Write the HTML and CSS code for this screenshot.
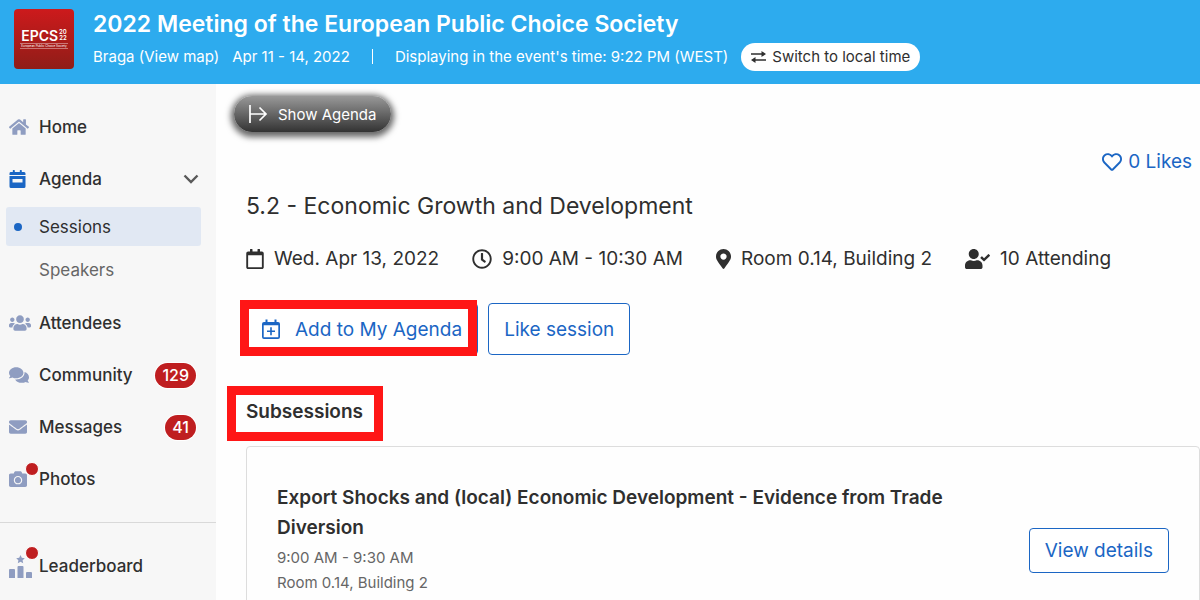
FILE: index.html
```html
<!DOCTYPE html>
<html lang="en">
<head>
    <meta charset="UTF-8">
    <meta name="viewport" content="width=device-width, initial-scale=1.0">
    <title>2022 Meeting of the European Public Choice Society</title>
    <link rel="stylesheet" href="styles.css">
</head>
<body>
    <header class="topbar">
        <div class="logo">
            <div class="logo-name">EPCS<span class="logo-year"><span>20</span><span>22</span></span></div>
            <div class="logo-sub">European Public Choice Society</div>
        </div>
        <div class="event">
            <h1>2022 Meeting of the European Public Choice Society</h1>
            <div class="event-info">
                <a href="#map">Braga (View map)</a>
                <span class="event-dates">Apr 11 - 14, 2022</span>
                <span class="separator"></span>
                <span>Displaying in the event's time: 9:22 PM (WEST)</span>
                <button class="switch-time" type="button">
                    <svg width="15" height="12" viewBox="0 0 15 12"><path d="M0 3h11M4 9h11" stroke="currentColor" stroke-width="1.7"/><path d="M10.5 0L15 3l-4.500 3zM4.500 6L0 9l4.500 3z" fill="currentColor"/></svg>
                    Switch to local time
                </button>
            </div>
        </div>
    </header>

    <div class="layout">
        <nav class="sidebar">
            <ul class="menu">
                <li><a href="#home" class="menu-item">
                    <span class="icon"><svg width="20" height="18" viewBox="0 0 576 512"><path d="M280.37 148.26L96 300.11V464a16 16 0 0 0 16 16l112.06-.29a16 16 0 0 0 15.92-16V368a16 16 0 0 1 16-16h64a16 16 0 0 1 16 16v95.64a16 16 0 0 0 16 16.05L464 480a16 16 0 0 0 16-16V300L295.67 148.26a12.19 12.19 0 0 0-15.3 0zM571.6 251.47L488 182.56V44.05a12 12 0 0 0-12-12h-56a12 12 0 0 0-12 12v72.61L318.47 43a48 48 0 0 0-61 0L4.34 251.47a12 12 0 0 0-1.6 16.9l25.5 31A12 12 0 0 0 45.15 301l235.22-193.74a12.19 12.19 0 0 1 15.3 0L530.9 301a12 12 0 0 0 16.9-1.6l25.5-31a12 12 0 0 0-1.7-16.93z"/></svg></span>
                    Home</a></li>
                <li><a href="#agenda" class="menu-item open">
                    <span class="icon"><svg width="17" height="18" viewBox="0 0 17 18"><path d="M1.500 2H3.800V.6a.6.6 0 0 1 .6-.6h.8a.6.6 0 0 1 .6.6V2h5V.6a.6.6 0 0 1 .6-.6h.8a.6.6 0 0 1 .6.6V2h2.300A1.500 1.500 0 0 1 16.500 3.500V5H.5V3.500A1.500 1.500 0 0 1 1.500 2z"/><path fill-rule="evenodd" d="M.5 6h16v10.500a1.500 1.500 0 0 1-1.500 1.500H2a1.500 1.500 0 0 1-1.500-1.500zM3.500 9v3.500h10V9z"/></svg></span>
                    Agenda
                    <svg class="chevron" width="16" height="10" viewBox="0 0 16 10"><path d="M1.500 1.500L8 8l6.500-6.500" fill="none" stroke="#595959" stroke-width="2.400"/></svg></a>
                    <ul class="submenu">
                        <li><a href="#sessions" class="active">Sessions</a></li>
                        <li><a href="#speakers">Speakers</a></li>
                    </ul>
                </li>
                <li><a href="#attendees" class="menu-item">
                    <span class="icon"><svg width="22" height="18" viewBox="0 0 640 512"><path d="M96 224c35.3 0 64-28.7 64-64s-28.7-64-64-64-64 28.7-64 64 28.700 64 64 64zm448 0c35.3 0 64-28.7 64-64s-28.7-64-64-64-64 28.700-64 64 28.700 64 64 64zm32 32h-64c-17.600 0-33.500 7.100-45.100 18.600 40.300 22.100 68.900 62 75.100 109.400h66c17.700 0 32-14.300 32-32v-32c0-35.300-28.700-64-64-64zm-256 0c61.900 0 112-50.100 112-112S381.900 32 320 32 208 82.100 208 144s50.100 112 112 112zm76.800 32h-8.300c-20.800 10-43.900 16-68.500 16s-47.600-6-68.500-16h-8.300C179.600 288 128 339.600 128 403.200V432c0 26.500 21.500 48 48 48h288c26.500 0 48-21.500 48-48v-28.800c0-63.600-51.600-115.200-115.200-115.200zm-223.700-13.400C161.500 263.100 145.600 256 128 256H64c-35.300 0-64 28.700-64 64v32c0 17.700 14.300 32 32 32h65.900c6.300-47.400 34.900-87.300 75.200-109.400z"/></svg></span>
                    Attendees</a></li>
                <li><a href="#community" class="menu-item">
                    <span class="icon"><svg width="20" height="18" viewBox="0 0 576 512"><path d="M416 192c0-88.400-93.100-160-208-160S0 103.600 0 192c0 34.300 14.100 65.900 38 92-13.400 30.200-35.500 54.200-35.800 54.500-2.200 2.300-2.800 5.700-1.500 8.700S4.800 352 8 352c36.600 0 66.900-12.300 88.700-25 32.200 15.700 70.300 25 111.300 25 114.900 0 208-71.600 208-160zm122 220c23.900-26 38-57.700 38-92 0-66.900-53.500-124.200-129.300-148.100.9 6.600 1.300 13.300 1.300 20.100 0 105.900-107.700 192-240 192-10.800 0-21.300-.8-31.700-1.900C207.800 439.600 281.800 480 368 480c41 0 79.100-9.200 111.300-25 21.800 12.700 52.100 25 88.700 25 3.200 0 6.100-1.900 7.300-4.800 1.300-2.900.7-6.300-1.500-8.700-.3-.3-22.400-24.200-35.800-54.500z"/></svg></span>
                    Community <span class="badge">129</span></a></li>
                <li><a href="#messages" class="menu-item">
                    <span class="icon"><svg width="18" height="18" viewBox="0 0 512 512"><path d="M502.300 190.800c3.900-3.100 9.700-.2 9.700 4.700V400c0 26.500-21.500 48-48 48H48c-26.500 0-48-21.500-48-48V195.600c0-5 5.700-7.800 9.700-4.700 22.400 17.400 52.100 39.500 154.100 113.600 21.100 15.400 56.700 47.800 92.200 47.600 35.700.3 72-32.800 92.300-47.600 102-74.100 131.600-96.300 154-113.700zM256 320c23.200.4 56.600-29.200 73.400-41.400 132.700-96.300 142.800-104.700 173.400-128.700 5.800-4.500 9.200-11.500 9.200-18.900v-19c0-26.500-21.500-48-48-48H48c-26.500 0-48 21.500-48 48v19c0 7.400 3.400 14.300 9.200 18.900 30.600 23.900 40.700 32.400 173.400 128.700 16.800 12.200 50.200 41.800 73.400 41.400z"/></svg></span>
                    Messages <span class="badge">41</span></a></li>
                <li><a href="#photos" class="menu-item">
                    <span class="icon has-dot"><svg width="18" height="18" viewBox="0 0 512 512"><path d="M512 144v288c0 26.500-21.500 48-48 48H48c-26.500 0-48-21.500-48-48V144c0-26.500 21.500-48 48-48h88l12.300-32.900c7-18.700 24.900-31.100 44.900-31.100h125.500c20 0 37.900 12.400 44.900 31.100L376 96h88c26.500 0 48 21.500 48 48zM376 288c0-66.200-53.800-120-120-120s-120 53.800-120 120 53.800 120 120 120 120-53.800 120-120zm-32 0c0 48.500-39.500 88-88 88s-88-39.500-88-88 39.500-88 88-88 88 39.500 88 88z"/></svg></span>
                    Photos</a></li>
            </ul>
            <ul class="menu menu-extra">
                <li><a href="#leaderboard" class="menu-item">
                    <span class="icon has-dot"><svg width="24" height="24" viewBox="0 0 24 24"><path d="M1 15h4a1 1 0 0 1 1 1v8H0v-8a1 1 0 0 1 1-1zM9.500 12h4a1 1 0 0 1 1 1v11h-6V13a1 1 0 0 1 1-1zM18 18h4a1 1 0 0 1 1 1v5h-6v-5a1 1 0 0 1 1-1zM11.500 1l1.300 2.800 3 .4-2.200 2.100.6 3L11.500 7.800 8.800 9.300l.6-3-2.200-2.100 3-.4z"/></svg></span>
                    Leaderboard</a></li>
            </ul>
        </nav>

        <main class="content">
            <button class="show-agenda" type="button">
                <svg width="20" height="20" viewBox="0 0 20 20"><path d="M2 1v18M2 10h16M11.500 3.500L18 10l-6.500 6.500" fill="none" stroke="#fff" stroke-width="1.700"/></svg>
                Show Agenda
            </button>

            <a href="#likes" class="likes">
                <svg width="20" height="20" viewBox="0 0 512 512"><path d="M458.400 64.300C400.600 15.700 311.300 23 256 79.300 200.700 23 111.400 15.600 53.600 64.300-21.600 127.600-10.600 230.800 43 285.500l175.400 178.700c10 10.200 23.400 15.900 37.600 15.900 14.300 0 27.600-5.600 37.600-15.800L469 285.600c53.500-54.700 64.700-157.900-10.600-221.300zm-23.600 187.500L259.400 430.500c-2.400 2.400-4.400 2.400-6.800 0L77.200 251.800c-36.500-37.200-43.900-107.600 7.300-150.700 38.900-32.700 98.900-27.800 136.500 10.500l35 35.700 35-35.700c37.800-38.500 97.800-43.200 136.500-10.600 51.100 43.100 43.500 113.900 7.300 150.800z"/></svg>
                0 Likes
            </a>

            <h2>5.2 - Economic Growth and Development</h2>

            <div class="session-info">
                <span class="info">
                    <svg width="18" height="20" viewBox="0 0 448 512"><path d="M400 64h-48V12c0-6.600-5.400-12-12-12h-40c-6.600 0-12 5.400-12 12v52H160V12c0-6.600-5.400-12-12-12h-40c-6.600 0-12 5.400-12 12v52H48C21.500 64 0 85.500 0 112v352c0 26.500 21.500 48 48 48h352c26.500 0 48-21.500 48-48V112c0-26.500-21.500-48-48-48zm-6 400H54c-3.300 0-6-2.700-6-6V160h352v298c0 3.300-2.700 6-6 6z"/></svg>
                    Wed. Apr 13, 2022
                </span>
                <span class="info">
                    <svg width="20" height="20" viewBox="0 0 512 512"><path d="M256 8C119 8 8 119 8 256s111 248 248 248 248-111 248-248S393 8 256 8zm0 448c-110.500 0-200-89.500-200-200S145.500 56 256 56s200 89.500 200 200-89.500 200-200 200zm61.800-104.400l-84.900-61.700c-3.100-2.300-4.900-5.900-4.900-9.700V116c0-6.600 5.400-12 12-12h32c6.600 0 12 5.400 12 12v141.700l66.800 48.600c5.400 3.900 6.500 11.400 2.600 16.800L334.600 349c-3.900 5.300-11.400 6.500-16.800 2.600z"/></svg>
                    9:00 AM - 10:30 AM
                </span>
                <span class="info">
                    <svg width="15" height="20" viewBox="0 0 384 512"><path d="M172.268 501.670C26.970 291.031 0 269.413 0 192 0 85.961 85.961 0 192 0s192 85.961 192 192c0 77.413-26.970 99.031-172.268 309.670-9.535 13.774-29.930 13.773-39.464 0zM192 272c44.183 0 80-35.817 80-80s-35.817-80-80-80-80 35.817-80 80 35.817 80 80 80z"/></svg>
                    Room 0.14, Building 2
                </span>
                <span class="info">
                    <svg width="25" height="20" viewBox="0 0 640 512"><path d="M224 256c70.700 0 128-57.300 128-128S294.700 0 224 0 96 57.300 96 128s57.300 128 128 128zm89.600 32h-16.700c-22.200 10.200-46.900 16-72.900 16s-50.600-5.800-72.900-16h-16.700C60.200 288 0 348.200 0 422.400V464c0 26.500 21.500 48 48 48h352c26.500 0 48-21.500 48-48v-41.600c0-74.200-60.200-134.400-134.400-134.400zm323-128.400l-27.800-28.100c-4.600-4.700-12.100-4.700-16.800-.1l-104.800 104-45.500-45.800c-4.600-4.700-12.100-4.700-16.800-.1l-28.100 27.900c-4.700 4.600-4.700 12.100-.1 16.800l81.700 82.300c4.600 4.700 12.100 4.700 16.800.1l141.300-140.200c4.600-4.700 4.700-12.200.1-16.800z"/></svg>
                    10 Attending
                </span>
            </div>

            <div class="actions">
                <button class="btn add-agenda" type="button">
                    <svg width="18" height="20" viewBox="0 0 18 20"><path fill-rule="evenodd" d="M3.500 3V.5h2V3h7V.5h2V3H16a2 2 0 0 1 2 2v13a2 2 0 0 1-2 2H2a2 2 0 0 1-2-2V5a2 2 0 0 1 2-2zM1.700 6.200v12.100h14.600V6.200z"/><path d="M8.200 8.200h1.600v3.200H13V13H9.800v3.200H8.200V13H5v-1.600h3.200z"/></svg>
                    Add to My Agenda
                </button>
                <button class="btn" type="button">Like session</button>
            </div>

            <h3><span class="marked">Subsessions</span></h3>

            <section class="card">
                <div class="card-body">
                    <h4>Export Shocks and (local) Economic Development - Evidence from Trade Diversion</h4>
                    <p>9:00 AM - 9:30 AM</p>
                    <p>Room 0.14, Building 2</p>
                </div>
                <button class="btn btn-details" type="button">View details</button>
            </section>
        </main>
    </div>
</body>
</html>
```
FILE: styles.css
```css
* {
    box-sizing: border-box;
}

body {
    margin: 0;
    height: 100vh;
    display: flex;
    flex-direction: column;
    overflow: hidden;
    font-family: Inter, "Liberation Sans", sans-serif;
    font-size: 17px;
    color: #2f2f2f;
    background: #fefefe;
}

h1, h2, h3, h4, p, ul {
    margin: 0;
    padding: 0;
}

ul {
    list-style: none;
}

a {
    color: inherit;
    text-decoration: none;
}

button {
    font-family: inherit;
    cursor: pointer;
}

svg {
    flex-shrink: 0;
    fill: currentColor;
}

/* header */
.topbar {
    display: flex;
    flex-shrink: 0;
    align-items: flex-start;
    gap: 19px;
    height: 84px;
    padding: 9px 14px;
    background: #2dabee;
    color: white;
}

.logo {
    width: 60px;
    height: 60px;
    padding-top: 18px;
    border-radius: 4px;
    background: linear-gradient(#cd1a1c, #8f1d18);
    text-align: center;
}

.logo-name {
    display: flex;
    justify-content: center;
    align-items: center;
    gap: 1px;
    height: 16px;
    font-size: 14px;
    font-weight: 600;
}

.logo-year {
    display: flex;
    flex-direction: column;
    font-size: 6px;
    line-height: 6px;
}

.logo-sub {
    margin: 0 6px;
    border-top: 1px solid rgba(255, 255, 255, 0.4);
    border-bottom: 1px solid rgba(255, 255, 255, 0.4);
    font-size: 3px;
    line-height: 4px;
    white-space: nowrap;
}

.event h1 {
    font-size: 23px;
    font-weight: 600;
    line-height: 30px;
}

.event-info {
    display: flex;
    align-items: center;
    height: 35px;
    font-size: 15px;
    white-space: nowrap;
}

.event-dates {
    margin-left: 13px;
}

.separator {
    width: 1px;
    height: 15px;
    margin: 0 22px;
    background: white;
}

.switch-time {
    display: flex;
    align-items: center;
    gap: 6px;
    height: 28px;
    margin-left: 13px;
    padding: 0 10px;
    border: none;
    border-radius: 14px;
    background: white;
    color: #2f2f2f;
    font-size: 15px;
}

.layout {
    display: flex;
    flex: 1;
    min-height: 0;
}

/* sidebar */
.sidebar {
    flex: 0 0 216px;
    padding-top: 17px;
    background: #f7f7f7;
    overflow: hidden;
}

.menu-item {
    display: flex;
    align-items: center;
    height: 52px;
    padding: 0 20px 0 9px;
    font-size: 17px;
    font-weight: 500;
}

.icon {
    position: relative;
    display: flex;
    flex: 0 0 30px;
    color: #8f9dc1;
}

.open .icon {
    color: #1b66c4;
}

.has-dot::after {
    content: "";
    position: absolute;
    top: -8px;
    left: 16px;
    width: 12px;
    height: 12px;
    border: 1px solid white;
    border-radius: 50%;
    background: #bf1e20;
}

.chevron {
    margin-left: auto;
    margin-right: -3px;
}

.submenu {
    padding: 2px 15px 8px 6px;
}

.submenu a {
    display: flex;
    align-items: center;
    height: 39px;
    padding-left: 33px;
    border-radius: 3px;
    font-size: 17px;
    color: #666;
}

.submenu li + li {
    margin-top: 4px;
}

.submenu .active {
    padding-left: 8px;
    background: #e1e8f3;
    color: #2f2f2f;
}

.submenu .active::before {
    content: "";
    width: 8px;
    height: 8px;
    margin-right: 17px;
    border-radius: 50%;
    background: #1b66c4;
}

.badge {
    margin-left: auto;
    padding: 0 7px;
    border-radius: 13px;
    background: #bf1e20;
    box-shadow: 0 0 0 1px white;
    color: white;
    font-size: 16px;
    line-height: 25px;
}

.menu-extra {
    margin-top: 17px;
    padding-top: 17px;
    border-top: 1px solid #d9d9d9;
}

/* session page */
.content {
    display: flex;
    flex: 1;
    flex-direction: column;
    min-width: 0;
    padding: 12px 0 0 30px;
    overflow: hidden;
}

.show-agenda {
    display: flex;
    flex-shrink: 0;
    align-self: flex-start;
    align-items: center;
    gap: 10px;
    height: 36px;
    margin-left: -12px;
    padding: 0 15px 0 14px;
    border: none;
    border-radius: 18px;
    background: linear-gradient(#999, #333);
    box-shadow: 0 2px 6px 3px rgba(0, 0, 0, 0.6);
    color: white;
    font-size: 15px;
}

.likes {
    display: flex;
    align-self: flex-end;
    align-items: center;
    gap: 6px;
    height: 26px;
    margin: 18px 8px 0 0;
    color: #1b66c4;
    font-size: 19px;
}

h2 {
    margin-top: 17px;
    font-size: 23px;
    font-weight: 400;
    line-height: 32px;
}

.session-info {
    display: flex;
    gap: 33px;
    margin-top: 23px;
    font-size: 19px;
    line-height: 28px;
    white-space: nowrap;
}

.info {
    display: flex;
    align-items: center;
    gap: 10px;
}

.actions {
    display: flex;
    gap: 10px;
    margin-top: 30px;
}

.btn {
    display: flex;
    flex-shrink: 0;
    align-items: center;
    height: 52px;
    padding: 0 15px;
    border: 1px solid #1b66c4;
    border-radius: 4px;
    background: white;
    color: #1b66c4;
    font-size: 19px;
    white-space: nowrap;
}

.add-agenda {
    position: relative;
    gap: 15px;
}

/* red highlight frames */
.add-agenda::after,
.marked::after {
    content: "";
    position: absolute;
    border: 9px solid #ff1616;
}

.add-agenda::after {
    inset: -4px 0 -2px -7px;
}

.marked {
    position: relative;
}

.marked::after {
    inset: -14px -20px -18px -19px;
}

h3 {
    margin-top: 42px;
    font-size: 19px;
    font-weight: 600;
    line-height: 30px;
}

.card {
    display: flex;
    flex-shrink: 0;
    justify-content: space-between;
    align-items: center;
    gap: 30px;
    margin-top: 19px;
    padding: 36px 30px;
    border: 1px solid #ddd;
    border-radius: 4px;
}

.card-body {
    min-height: 134px;
    max-width: 700px;
}

.card h4 {
    margin-bottom: 2px;
    font-size: 19px;
    font-weight: 600;
    line-height: 30px;
}

.card p {
    color: #666;
    font-size: 15px;
    line-height: 25px;
}

.btn-details {
    height: 45px;
}
```
